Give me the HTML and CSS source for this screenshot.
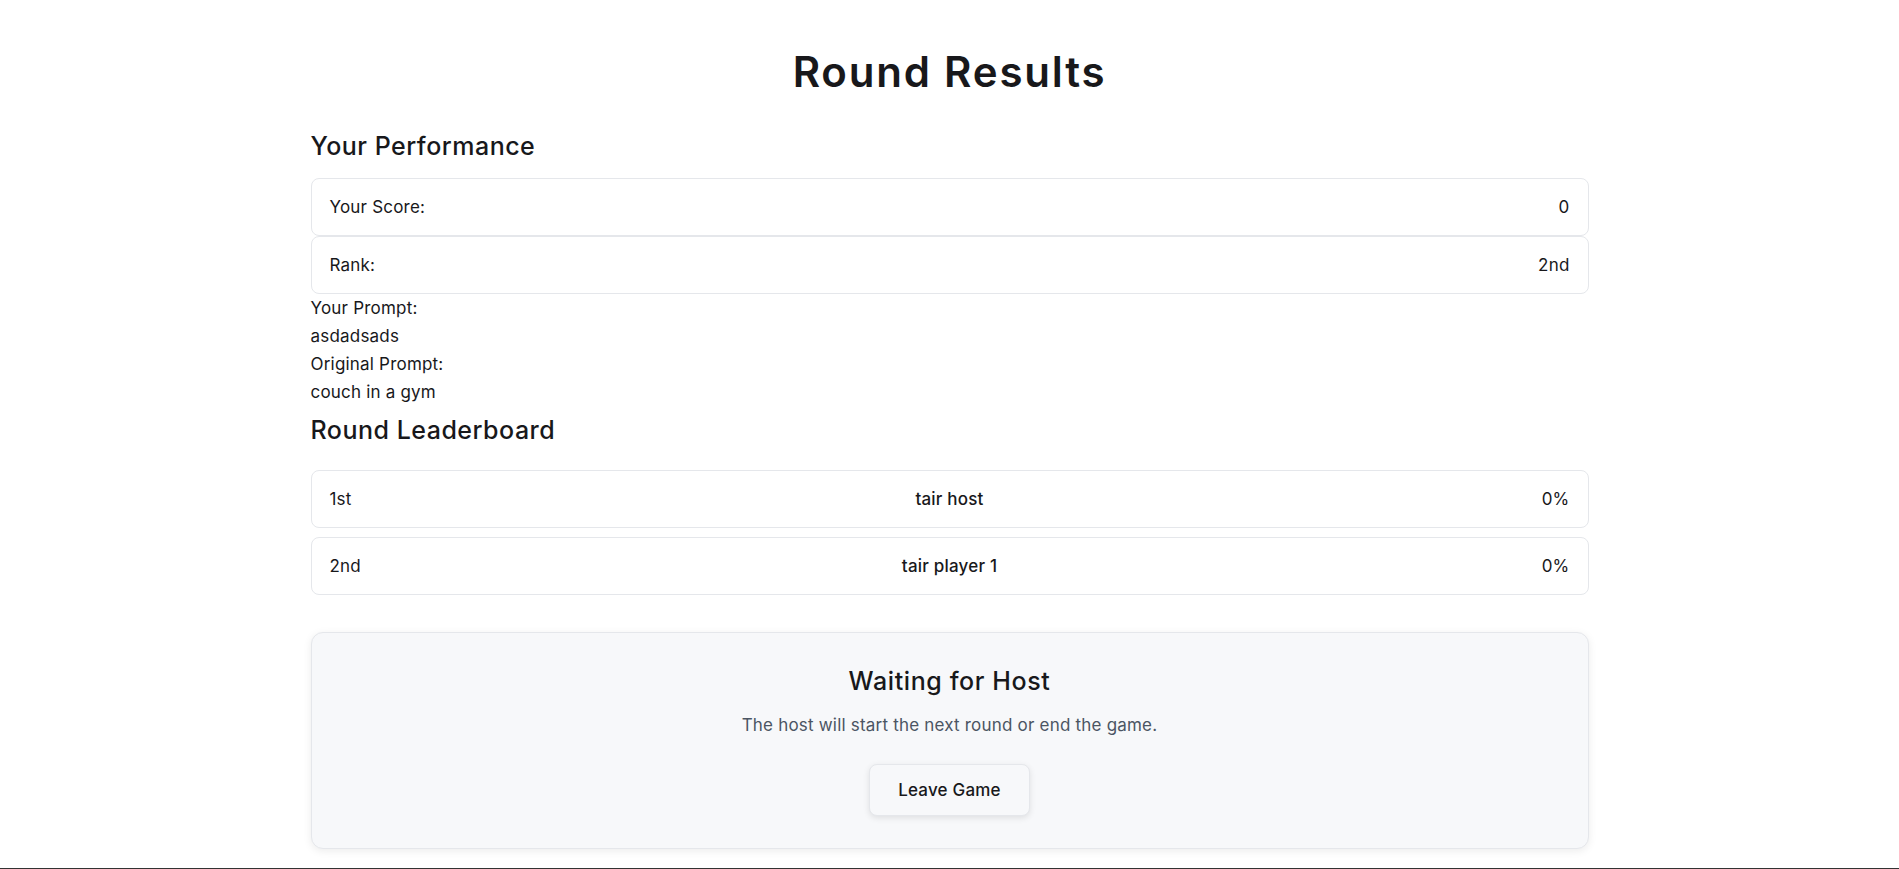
FILE: index.html
```html
<!DOCTYPE html>
<html lang="en">
<head>
<meta charset="utf-8">
<title>Round Results</title>
<link rel="stylesheet" href="styles.css">
</head>
<body>
<main class="page">
  <h1 class="title">Round Results</h1>

  <section class="performance">
    <h2 class="section-title">Your Performance</h2>
    <div class="stat-card">
      <span>Your Score:</span>
      <span>0</span>
    </div>
    <div class="stat-card">
      <span>Rank:</span>
      <span>2nd</span>
    </div>
    <div class="prompts">
      <p>Your Prompt:</p>
      <p>asdadsads</p>
      <p>Original Prompt:</p>
      <p>couch in a gym</p>
    </div>
  </section>

  <section class="leaderboard">
    <h2 class="section-title lb-title">Round Leaderboard</h2>
    <ul class="lb-list">
      <li class="lb-row">
        <span class="lb-rank">1st</span>
        <span class="lb-name">tair host</span>
        <span class="lb-score">0%</span>
      </li>
      <li class="lb-row">
        <span class="lb-rank">2nd</span>
        <span class="lb-name">tair player 1</span>
        <span class="lb-score">0%</span>
      </li>
    </ul>
  </section>

  <section class="waiting">
    <h3 class="waiting-title">Waiting for Host</h3>
    <p class="waiting-text">The host will start the next round or end the game.</p>
    <button class="leave-btn" type="button">Leave Game</button>
  </section>
</main>
<footer class="footer"></footer>
</body>
</html>
```

FILE: styles.css
```css
* {
  box-sizing: border-box;
}

html, body {
  margin: 0;
  padding: 0;
  background: #ffffff;
}

body {
  font-family: Inter, "Noto Sans", "Liberation Sans", sans-serif;
  color: #18181b;
  font-size: 17px;
  letter-spacing: 0.2px;
  line-height: 28px;
}

.page {
  max-width: 1278px;
  margin: 0 auto;
  padding: 48px 0 19px;
}

.title {
  margin: 0 0 34px;
  text-align: center;
  font-size: 42px;
  line-height: 48px;
  font-weight: 600;
  letter-spacing: 1.8px;
}

.section-title {
  margin: 0 0 16px;
  font-size: 25px;
  line-height: 32px;
  font-weight: 500;
  letter-spacing: 0.5px;
}

.stat-card {
  display: flex;
  justify-content: space-between;
  align-items: center;
  padding: 16px 18px;
  line-height: 24px;
  border: 1px solid #e5e7eb;
  border-radius: 8px;
  background: #fff;
}

.prompts p {
  margin: 0;
  line-height: 28px;
}

.lb-title {
  margin-top: 8px;
  margin-bottom: 24px;
}

.lb-list {
  list-style: none;
  margin: 0;
  padding: 0;
  display: flex;
  flex-direction: column;
  gap: 9px;
}

.lb-row {
  display: grid;
  grid-template-columns: 1fr auto 1fr;
  align-items: center;
  padding: 16px 18px;
  line-height: 24px;
  border: 1px solid #e5e7eb;
  border-radius: 8px;
  background: #fff;
}

.lb-name {
  font-weight: 500;
  text-align: center;
}

.lb-score {
  text-align: right;
}

.waiting {
  margin-top: 37px;
  padding: 32px;
  border: 1px solid #e5e7eb;
  border-radius: 12px;
  background: #f7f8fa;
  box-shadow: 0 2px 8px rgba(0, 0, 0, 0.08);
  display: flex;
  flex-direction: column;
  align-items: center;
}

.waiting-title {
  margin: 0 0 16px;
  font-size: 25px;
  line-height: 32px;
  font-weight: 500;
  letter-spacing: 0.6px;
}

.waiting-text {
  margin: 0 0 27px;
  line-height: 24px;
  color: #4b5563;
}

.leave-btn {
  font-family: inherit;
  font-size: 17px;
  letter-spacing: 0.2px;
  font-weight: 500;
  color: #18181b;
  line-height: 24px;
  padding: 13px 28px;
  border: 1px solid #e5e7eb;
  border-radius: 8px;
  background: #f7f8fa;
  box-shadow: 0 2px 6px rgba(0, 0, 0, 0.1);
  cursor: pointer;
}

.footer {
  height: 40px;
  background: #333333;
}
```
